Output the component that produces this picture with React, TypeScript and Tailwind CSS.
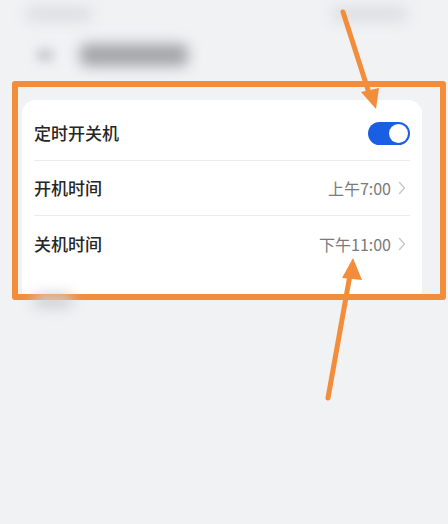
import React from "react";

const font = { fontFamily: '"Noto Sans CJK SC", "Noto Sans", sans-serif' };

function Toggle() {
  return (
    <div className="flex h-[23px] w-[42px] items-center justify-end rounded-full bg-[#1a5fe3] p-[2px]">
      <div className="h-[19px] w-[19px] rounded-full bg-white" />
    </div>
  );
}

function Chevron() {
  return (
    <svg width="8" height="14" viewBox="0 0 8 14" className="ml-[7px]">
      <path d="M1.5 1.5 L6.5 7 L1.5 12.5" fill="none" stroke="#c8c8c8" strokeWidth="1.4" strokeLinecap="round" strokeLinejoin="round" />
    </svg>
  );
}

function Row({ label, value, last }: { label: string; value?: string; last?: boolean }) {
  return (
    <div className={`flex h-[55px] items-center justify-between ${last ? "" : "border-b border-[#ececec]"}`}>
      <span className="text-[17px] font-medium text-[#262626]">{label}</span>
      {value ? (
        <span className="flex items-center pr-[4px] text-[16px] text-[#7a7a7a]">
          {value}
          <Chevron />
        </span>
      ) : (
        <Toggle />
      )}
    </div>
  );
}

export default function App() {
  return (
    <div className="relative h-[524px] w-[448px] overflow-hidden bg-[#f1f2f4]" style={font}>
      {/* status bar (blurred) */}
      <div className="flex h-[28px] items-center justify-between pl-[26px] pr-[40px]">
        <div className="h-[14px] w-[66px] rounded bg-[#dcdde0] blur-[7px]" />
        <div className="h-[14px] w-[76px] rounded bg-[#dcdde0] blur-[7px]" />
      </div>
      {/* title bar (blurred) */}
      <div className="flex h-[53px] items-center gap-[26px] pl-[36px]">
        <div className="h-[14px] w-[18px] rounded bg-[#d0d1d4] blur-[5px]" />
        <div className="h-[22px] w-[108px] rounded-md bg-[#a3a4a7] blur-[7px]" />
      </div>

      {/* highlighted settings group */}
      <div className="ml-[12px] mr-[2px] h-[219px] overflow-hidden rounded-[3px] border-[6px] border-[#f28d3b] pl-[4px] pr-[18px] pt-[13px]">
        <div className="h-full rounded-t-[14px] bg-white pl-[12px] pr-[12px] pt-[6px]">
          <Row label="定时开关机" />
          <Row label="开机时间" value="上午7:00" />
          <Row label="关机时间" value="下午11:00" last />
        </div>
      </div>

      <div className="ml-[34px] mt-[-6px] h-[14px] w-[38px] rounded bg-[#cfd0d3] blur-[7px]" />

      {/* annotation arrows */}
      <svg className="pointer-events-none absolute left-0 top-0" width="448" height="524" viewBox="0 0 448 524">
        <line x1="343" y1="12" x2="369" y2="93" stroke="#f28d3b" strokeWidth="5" strokeLinecap="round" />
        <polygon points="376,109 361,92 379,88" fill="#f28d3b" />
        <line x1="328" y1="398" x2="350" y2="275" stroke="#f28d3b" strokeWidth="5" strokeLinecap="round" />
        <polygon points="353,258 342,278 362,280" fill="#f28d3b" />
      </svg>
    </div>
  );
}
